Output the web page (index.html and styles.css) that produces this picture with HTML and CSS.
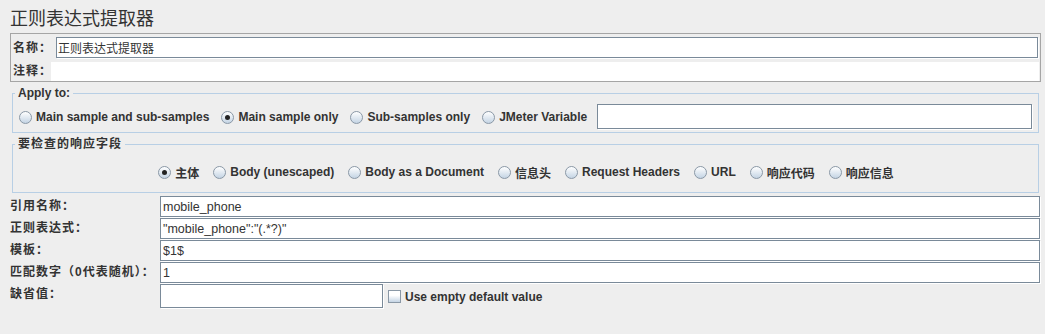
FILE: index.html
```html
<!DOCTYPE html>
<html lang="zh-CN">

<head>
  <meta charset="UTF-8">
  <meta name="viewport" content="width=device-width, initial-scale=1.0">
  <title>正则表达式提取器</title>
  <link rel="stylesheet" href="styles.css">
</head>

<body>
  <h1 class="title">正则表达式提取器</h1>

  <div class="name-box">
    <div class="name-row">
      <label class="name-label">名称：</label>
      <input class="field name-field" type="text" value="正则表达式提取器">
    </div>
    <div class="name-row">
      <label class="name-label comment-label">注释：</label>
      <div class="comment-field"></div>
    </div>
  </div>

  <fieldset class="group apply">
    <legend>Apply to:</legend>
    <div class="radio-row">
      <label class="radio"><span class="radio-icon"></span>Main sample and sub-samples</label>
      <label class="radio"><span class="radio-icon checked"></span>Main sample only</label>
      <label class="radio"><span class="radio-icon"></span>Sub-samples only</label>
      <label class="radio"><span class="radio-icon"></span>JMeter Variable</label>
      <input class="field var-field" type="text">
    </div>
  </fieldset>

  <fieldset class="group fields">
    <legend class="cjk">要检查的响应字段</legend>
    <div class="radio-row centered">
      <label class="radio"><span class="radio-icon checked"></span>主体</label>
      <label class="radio"><span class="radio-icon"></span>Body (unescaped)</label>
      <label class="radio"><span class="radio-icon"></span>Body as a Document</label>
      <label class="radio"><span class="radio-icon"></span>信息头</label>
      <label class="radio"><span class="radio-icon"></span>Request Headers</label>
      <label class="radio"><span class="radio-icon"></span>URL</label>
      <label class="radio"><span class="radio-icon"></span>响应代码</label>
      <label class="radio"><span class="radio-icon"></span>响应信息</label>
    </div>
  </fieldset>

  <div class="form">
    <label class="form-label">引用名称：</label>
    <input class="field" type="text" value="mobile_phone">

    <label class="form-label">正则表达式：</label>
    <input class="field" type="text" value='"mobile_phone":"(.*?)"'>

    <label class="form-label">模板：</label>
    <input class="field" type="text" value="$1$">

    <label class="form-label">匹配数字（0代表随机）：</label>
    <input class="field" type="text" value="1">

    <label class="form-label">缺省值：</label>
    <div class="default-row">
      <input class="field default-field" type="text">
      <label class="check"><span class="check-icon"></span>Use empty default value</label>
    </div>
  </div>
</body>

</html>
```

FILE: styles.css
```css
html {
  box-sizing: border-box;
}

*,
*::before,
*::after {
  box-sizing: inherit;
}

body {
  margin: 0;
  padding: 0 4px 0 10px;
  background-color: #eeeeee;
  color: #333333;
  font-family: "Liberation Sans", "Noto Sans CJK SC", sans-serif;
  font-size: 12px;
}

.title {
  margin: 0;
  height: 33px;
  padding-top: 8px;
  font-size: 18px;
  font-weight: normal;
  line-height: 22px;
}

/* text fields (Metal look: dark frame, white shadow) */
.field {
  display: block;
  margin: 0 1px 1px 0;
  padding: 0 2px;
  height: 21px;
  border: 1px solid #7a8a99;
  box-shadow: 1px 1px 0 #ffffff;
  background-color: #ffffff;
  color: #333333;
  font-family: "Liberation Sans", "Noto Sans CJK SC", sans-serif;
  font-size: 12.5px;
  outline: none;
}

/* name / comment box */
.name-box {
  height: 49px;
  padding: 3px 1px 0 2px;
  border: 1px solid #a5a5a5;
}

.name-row {
  display: flex;
  align-items: center;
}

.name-row + .name-row {
  margin-top: 3px;
}

.name-label,
.form-label,
.cjk {
  font-weight: bold;
  letter-spacing: 1px;
  white-space: nowrap;
}

.name-label {
  flex: none;
  width: 43px;
  line-height: 19px;
}

.comment-label {
  width: 38px;
}

.name-field {
  flex: 1;
  padding: 0 1px;
  font-size: 12px;
}

.comment-field {
  flex: 1;
  height: 19px;
  background-color: #ffffff;
}

/* titled groups */
.group {
  margin: 4px 2px 0 2px;
  padding: 4px 5px 2px 5px;
  border: 1px solid #b8cfe5;
}

.group legend {
  margin-left: -3px;
  padding: 0 3px;
  font-weight: bold;
  line-height: 14px;
}

.fields {
  padding-top: 11px;
  padding-bottom: 10px;
}

.radio-row {
  display: flex;
  align-items: center;
  gap: 12px;
  height: 26px;
  padding-left: 1px;
}

.radio-row.centered {
  justify-content: center;
  gap: 14px;
  height: 20px;
}

.radio,
.check {
  display: flex;
  align-items: center;
  gap: 4px;
  font-weight: bold;
  white-space: nowrap;
}

.radio-icon {
  position: relative;
  width: 13px;
  height: 13px;
  border: 1px solid #8a98a6;
  border-radius: 50%;
  background: linear-gradient(#ffffff, #c4d4e4);
}

.radio-icon.checked::after {
  content: "";
  position: absolute;
  top: 3px;
  left: 3px;
  width: 5px;
  height: 5px;
  border-radius: 50%;
  background-color: #222222;
}

.var-field {
  flex: 1;
  height: 25px;
  margin-left: -2px;
}

/* label / value rows */
.form {
  display: grid;
  grid-template-columns: 150px 1fr;
  margin-top: 3px;
}

.form-label {
  line-height: 21px;
}

.default-row {
  display: flex;
  align-items: center;
}

.default-field {
  width: 223px;
  height: 24px;
}

.check {
  margin-left: 4px;
}

.check-icon {
  width: 13px;
  height: 13px;
  border: 1px solid #8a98a6;
  background: linear-gradient(#ffffff 40%, #c4d4e4);
}
```
